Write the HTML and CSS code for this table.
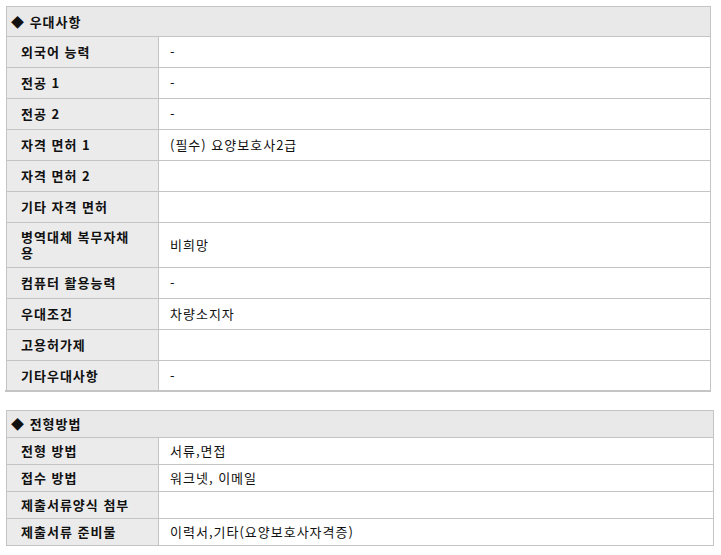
FILE: index.html
```html
<!DOCTYPE html>
<html lang="ko">
<head>
<meta charset="utf-8">
<link rel="stylesheet" href="styles.css">
</head>
<body>
<div class="page">
  <div class="wrap1">
    <table class="info info1">
      <colgroup><col class="col-label"><col></colgroup>
      <tr><th colspan="2" class="title">◆ 우대사항</th></tr>
      <tr><td class="label">외국어 능력</td><td class="value">-</td></tr>
      <tr><td class="label">전공 1</td><td class="value">-</td></tr>
      <tr><td class="label">전공 2</td><td class="value">-</td></tr>
      <tr><td class="label">자격 면허 1</td><td class="value">(필수) 요양보호사2급</td></tr>
      <tr><td class="label">자격 면허 2</td><td class="value"></td></tr>
      <tr><td class="label">기타 자격 면허</td><td class="value"></td></tr>
      <tr class="tall"><td class="label">병역대체 복무자채용</td><td class="value">비희망</td></tr>
      <tr><td class="label">컴퓨터 활용능력</td><td class="value">-</td></tr>
      <tr><td class="label">우대조건</td><td class="value">차량소지자</td></tr>
      <tr><td class="label">고용허가제</td><td class="value"></td></tr>
      <tr class="last"><td class="label">기타우대사항</td><td class="value">-</td></tr>
    </table>
  </div>
  <table class="info info2">
    <colgroup><col class="col-label"><col></colgroup>
    <tr><th colspan="2" class="title">◆ 전형방법</th></tr>
    <tr><td class="label">전형 방법</td><td class="value">서류,면접</td></tr>
    <tr><td class="label">접수 방법</td><td class="value">워크넷, 이메일</td></tr>
    <tr><td class="label">제출서류양식 첨부</td><td class="value"></td></tr>
    <tr><td class="label">제출서류 준비물</td><td class="value">이력서,기타(요양보호사자격증)</td></tr>
  </table>
</div>
</body>
</html>
```

FILE: styles.css
```css
html, body {
  margin: 0;
  padding: 0;
  background: #ffffff;
}
body {
  font-family: "Noto Sans CJK KR", "Noto Sans", sans-serif;
  font-size: 13px;
  color: #111111;
}
.page {
  padding: 6px 0 0 5px;
}
.wrap1 {
  width: 706px;
  border-bottom: 2px solid #c4c4c4;
}
.info {
  border-collapse: collapse;
  table-layout: fixed;
}
.col-label {
  width: 152px;
}
.info1 {
  width: 705px;
  margin-left: 1px;
}
.info2 {
  width: 708px;
  margin-left: 1px;
  margin-top: 18px;
}
.info th,
.info td {
  border: 1px solid #c4c4c4;
  line-height: 16px;
  vertical-align: middle;
  letter-spacing: 1px;
}
.info1 .last td {
  border-bottom: none;
  padding-bottom: 6px;
}
.title {
  background: #e9e9e9;
  text-align: left;
  font-weight: bold;
  padding: 7px 4px 6px 4px;
}
.info2 .title {
  padding: 5px 4px 5px 4px;
}
.label {
  background: #ebebeb;
  font-weight: bold;
  padding: 7px 20px 7px 14px;
}
.value {
  background: #ffffff;
  padding: 7px 10px 7px 11px;
}
.info1 .tall td {
  padding-top: 6px;
  padding-bottom: 6px;
}
.info2 .label,
.info2 .value {
  padding-top: 5px;
  padding-bottom: 5px;
}
```
